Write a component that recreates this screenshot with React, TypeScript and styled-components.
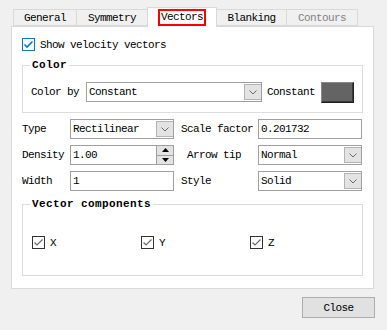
import React from "react";
import styled, { createGlobalStyle } from "styled-components";

const Global = createGlobalStyle`
  html, body { margin: 0; padding: 0; background: #f0f0f0; }
  body {
    font-family: "Liberation Mono", "DejaVu Sans Mono", monospace;
    font-size: 11px;
    letter-spacing: -0.6px;
    color: #000;
  }
`;

const Dialog = styled.div`
  width: 387px;
  height: 330px;
  box-sizing: border-box;
  padding: 7px 13px 0 11px;
  display: flex;
  flex-direction: column;
`;

const TabBar = styled.div`
  display: flex;
  align-items: flex-end;
  height: 20px;
  padding-left: 2px;
  margin-bottom: -1px;
  position: relative;
  z-index: 1;
`;

const Tab = styled.div<{ $w: number; $active?: boolean; $disabled?: boolean }>`
  box-sizing: border-box;
  width: ${(p) => p.$w}px;
  height: ${(p) => (p.$active ? 20 : 17)}px;
  margin-bottom: ${(p) => (p.$active ? 0 : 1)}px;
  margin-left: -1px;
  &:first-child { margin-left: 0; }
  border: 1px solid #d9d9d9;
  border-bottom: ${(p) => (p.$active ? "none" : "1px solid #d9d9d9")};
  background: ${(p) => (p.$active ? "#fff" : "#f0f0f0")};
  color: ${(p) => (p.$disabled ? "#838383" : "#000")};
  display: flex;
  justify-content: center;
  align-items: ${(p) => (p.$active ? "flex-start" : "center")};
  padding-top: ${(p) => (p.$active ? 1 : 1)}px;
  line-height: 13px;
`;

const FocusRing = styled.span`
  border: 2px solid #f00;
  padding: 0 1px;
  line-height: 13px;
`;

const Pane = styled.div`
  box-sizing: border-box;
  height: 263px;
  border: 1px solid #d9d9d9;
  background: #fff;
  padding: 11px 10px 0 10px;
  display: flex;
  flex-direction: column;
`;

const CheckRow = styled.label`
  display: flex;
  align-items: center;
  gap: 5px;
  height: 13px;
  line-height: 13px;
`;

const CheckText = styled.span`
  padding-top: 1px;
`;

const Box = styled.span<{ $blue?: boolean }>`
  box-sizing: border-box;
  width: 13px;
  height: 13px;
  border: 1px solid ${(p) => (p.$blue ? "#0078d7" : "#333")};
  background: #fff;
  display: inline-flex;
  flex: none;
  svg { display: block; }
`;

const Check = ({ blue }: { blue?: boolean }) => (
  <Box $blue={blue}>
    <svg width="11" height="11" viewBox="0 0 11 11">
      <polyline
        points="1.5,5.5 4,8 9.5,2.5"
        fill="none"
        stroke={blue ? "#0078d7" : "#6b6b6b"}
        strokeWidth={blue ? 1.6 : 1.2}
      />
    </svg>
  </Box>
);

const Group = styled.div<{ $mt: number; $pb: number }>`
  margin-top: ${(p) => p.$mt}px;
  border: 1px solid #dcdcdc;
  padding: 0 8px ${(p) => p.$pb}px 8px;
  display: flex;
  flex-direction: column;
`;

const Legend = styled.div`
  align-self: flex-start;
  margin-top: -7px;
  margin-left: -1px;
  padding: 0 2px;
  height: 12px;
  line-height: 12px;
  background: #fff;
  font-weight: bold;
  letter-spacing: 0.4px;
`;

const ColorRow = styled.div`
  display: flex;
  align-items: center;
  height: 20px;
  margin-top: 11px;
`;

const Label = styled.span<{ $w?: number; $pl?: number }>`
  width: ${(p) => (p.$w ? `${p.$w}px` : "auto")};
  padding-left: ${(p) => p.$pl ?? 0}px;
  padding-top: 1px;
  white-space: nowrap;
  line-height: 13px;
  display: flex;
  align-items: center;
`;

const Field = styled.div<{ $w: number }>`
  box-sizing: border-box;
  width: ${(p) => p.$w}px;
  height: 20px;
  border: 1px solid #a0a0a0;
  background: #fff;
  display: flex;
  align-items: stretch;
`;

const FieldText = styled.span`
  flex: 1;
  padding: 1px 0 0 2px;
  display: flex;
  align-items: center;
  line-height: 13px;
`;

const DropButton = styled.span`
  box-sizing: border-box;
  width: 17px;
  background: #e3e3e3;
  border: 1px solid #b4b4b4;
  border-right: none;
  margin: 1px 0;
  display: flex;
  align-items: center;
  justify-content: center;
`;

const Chevron = () => (
  <svg width="8" height="5" viewBox="0 0 8 5">
    <polyline points="0.5,0.5 4,4 7.5,0.5" fill="none" stroke="#6a6a6a" strokeWidth="1" />
  </svg>
);

const SpinCol = styled.span`
  width: 16px;
  display: flex;
  flex-direction: column;
  border-left: 1px solid #a0a0a0;
`;

const SpinHalf = styled.span<{ $top?: boolean }>`
  flex: 1;
  background: #e3e3e3;
  border-top: ${(p) => (p.$top ? "none" : "1px solid #a0a0a0")};
  display: flex;
  align-items: center;
  justify-content: center;
`;

const Combo = ({ w, value }: { w: number; value: string }) => (
  <Field $w={w}>
    <FieldText>{value}</FieldText>
    <DropButton>
      <Chevron />
    </DropButton>
  </Field>
);

const Swatch = styled.span`
  box-sizing: border-box;
  width: 33px;
  height: 21px;
  margin-left: 6px;
  background: #646464;
  border: 1px solid #8a8a8a;
  border-right-color: #202020;
  border-bottom-color: #202020;
  box-shadow: inset -1px -1px 0 #3a3a3a;
`;

const FormGrid = styled.div`
  margin-top: 6px;
  display: grid;
  grid-template-columns: 48px 104px 84px 104px;
  grid-auto-rows: 20px;
  row-gap: 6px;
`;

const CheckGrid = styled.div`
  margin-top: 26px;
  padding-left: 1px;
  display: grid;
  grid-template-columns: 109px 109px 109px;
`;

const Footer = styled.div`
  display: flex;
  justify-content: flex-end;
  margin-top: 8px;
  margin-right: -1px;
`;

const Button = styled.div`
  box-sizing: border-box;
  width: 73px;
  height: 21px;
  padding-top: 1px;
  background: #e1e1e1;
  border: 1px solid #adadad;
  display: flex;
  align-items: center;
  justify-content: center;
  line-height: 13px;
`;

export default function App() {
  return (
    <>
      <Global />
      <Dialog>
        <TabBar>
          <Tab $w={64}>General</Tab>
          <Tab $w={72}>Symmetry</Tab>
          <Tab $w={70} $active>
            <FocusRing>Vectors</FocusRing>
          </Tab>
          <Tab $w={71}>Blanking</Tab>
          <Tab $w={72} $disabled>
            Contours
          </Tab>
        </TabBar>
        <Pane>
          <CheckRow>
            <Check blue />
            <CheckText>Show velocity vectors</CheckText>
          </CheckRow>
          <Group $mt={14} $pb={10}>
            <Legend>Color</Legend>
            <ColorRow>
              <Label $w={55}>Color by</Label>
              <Combo w={176} value="Constant" />
              <Label $pl={5}>Constant</Label>
              <Swatch />
            </ColorRow>
          </Group>
          <FormGrid>
            <Label>Type</Label>
            <Combo w={104} value="Rectilinear" />
            <Label $pl={7}>Scale factor</Label>
            <Field $w={104}>
              <FieldText>0.201732</FieldText>
            </Field>

            <Label>Density</Label>
            <Field $w={104}>
              <FieldText>1.00</FieldText>
              <SpinCol>
                <SpinHalf $top>
                  <svg width="7" height="4" viewBox="0 0 7 4">
                    <polygon points="0,4 7,4 3.5,0" fill="#000" />
                  </svg>
                </SpinHalf>
                <SpinHalf>
                  <svg width="7" height="4" viewBox="0 0 7 4">
                    <polygon points="0,0 7,0 3.5,4" fill="#000" />
                  </svg>
                </SpinHalf>
              </SpinCol>
            </Field>
            <Label $pl={13}>Arrow tip</Label>
            <Combo w={104} value="Normal" />

            <Label>Width</Label>
            <Field $w={104}>
              <FieldText>1</FieldText>
            </Field>
            <Label $pl={7}>Style</Label>
            <Combo w={104} value="Solid" />
          </FormGrid>
          <Group $mt={13} $pb={26}>
            <Legend>Vector components</Legend>
            <CheckGrid>
              <CheckRow>
                <Check />
                <CheckText>X</CheckText>
              </CheckRow>
              <CheckRow>
                <Check />
                <CheckText>Y</CheckText>
              </CheckRow>
              <CheckRow>
                <Check />
                <CheckText>Z</CheckText>
              </CheckRow>
            </CheckGrid>
          </Group>
        </Pane>
        <Footer>
          <Button>Close</Button>
        </Footer>
      </Dialog>
    </>
  );
}
